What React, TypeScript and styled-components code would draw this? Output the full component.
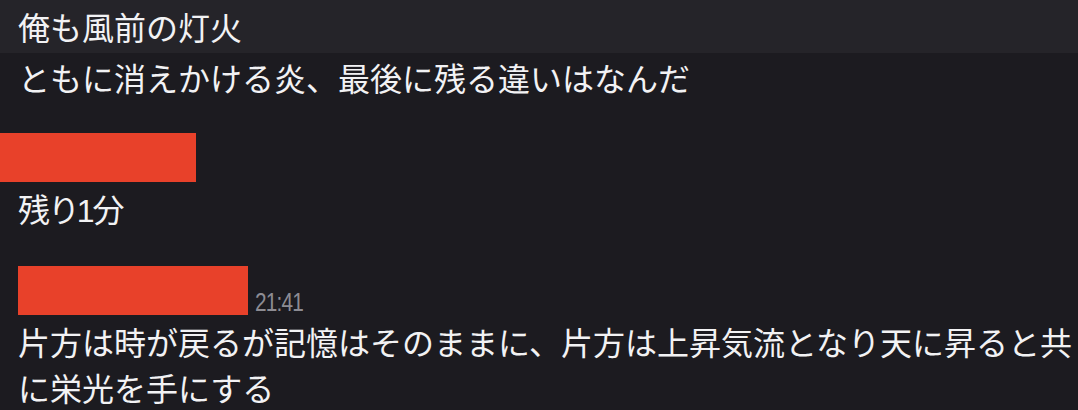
import React from "react";
import styled, { createGlobalStyle } from "styled-components";

const Global = createGlobalStyle`
  html, body {
    margin: 0;
    padding: 0;
    background: #1c1b20;
  }
  body {
    font-family: "Noto Sans CJK JP", "Noto Sans", sans-serif;
    color: #f2f2f4;
  }
`;

const Page = styled.div`
  width: 1078px;
  height: 410px;
  overflow: hidden;
  background: #1c1b20;
  display: flex;
  flex-direction: column;
`;

const Header = styled.div`
  height: 53px;
  background: #252429;
  padding-left: 18px;
  display: flex;
  align-items: center;
  font-size: 32px;
  line-height: 53px;
  color: #f2f2f4;
  flex-shrink: 0;
`;

const Feed = styled.div`
  padding-left: 18px;
  display: flex;
  flex-direction: column;
`;

const Text = styled.div<{ $top?: number; $prop?: boolean }>`
  font-size: 32px;
  line-height: 46px;
  margin-top: ${(p) => p.$top ?? 0}px;
  color: #f2f2f4;
  word-break: break-all;
  ${(p) => (p.$prop ? `font-feature-settings: "palt" 1;` : "")}
`;

const Digit = styled.span`
  font-family: "Liberation Sans", sans-serif;
  letter-spacing: -4px;
  margin-right: 2px;
`;

const Redact = styled.div<{ $w: number; $left?: number }>`
  width: ${(p) => p.$w}px;
  height: 49px;
  margin-left: ${(p) => p.$left ?? 0}px;
  background: #e8412a;
  flex-shrink: 0;
`;

const SenderRow = styled.div<{ $top?: number }>`
  display: flex;
  align-items: flex-end;
  gap: 7px;
  margin-top: ${(p) => p.$top ?? 0}px;
`;

const Time = styled.span`
  display: inline-block;
  font-family: "Liberation Sans", "Noto Sans", sans-serif;
  font-size: 26px;
  letter-spacing: -1px;
  line-height: 26px;
  color: #8d8c93;
  transform: scaleX(0.8);
  transform-origin: left bottom;
  padding-bottom: 0px;
`;

export default function App() {
  return (
    <Page>
      <Global />
      <Header>俺も風前の灯火</Header>
      <Feed>
        <Text $top={1}>ともに消えかける炎、最後に残る違いはなんだ</Text>
        <SenderRow $top={33}>
          <Redact $w={196} $left={-18} />
        </SenderRow>
        <Text $top={3} $prop>
          残り<Digit>1</Digit>分
        </Text>
        <SenderRow $top={32}>
          <Redact $w={230} />
          <Time>21:41</Time>
        </SenderRow>
        <Text $top={3}>
          片方は時が戻るが記憶はそのままに、片方は上昇気流となり天に昇ると共に栄光を手にする
        </Text>
      </Feed>
    </Page>
  );
}
